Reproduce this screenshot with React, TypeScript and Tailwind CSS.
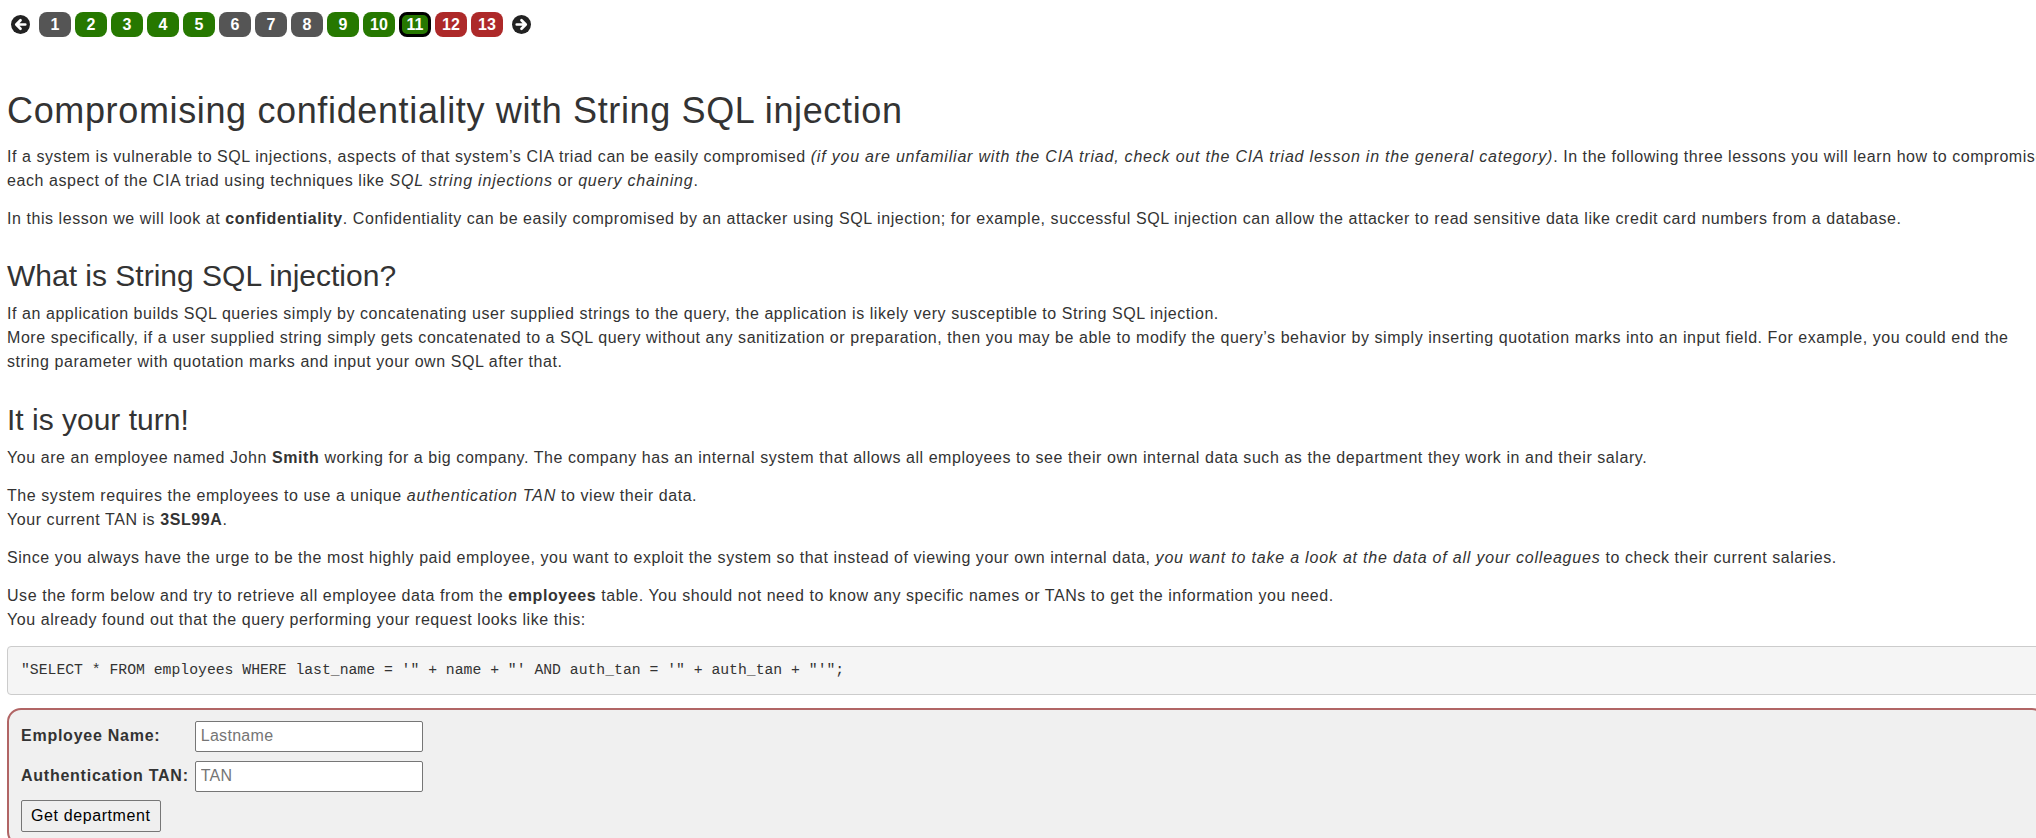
import React from 'react';

type PageState = 'gray' | 'green' | 'red';

const pages: { n: number; state: PageState }[] = [
  { n: 1, state: 'gray' },
  { n: 2, state: 'green' },
  { n: 3, state: 'green' },
  { n: 4, state: 'green' },
  { n: 5, state: 'green' },
  { n: 6, state: 'gray' },
  { n: 7, state: 'gray' },
  { n: 8, state: 'gray' },
  { n: 9, state: 'green' },
  { n: 10, state: 'green' },
  { n: 11, state: 'green' },
  { n: 12, state: 'red' },
  { n: 13, state: 'red' },
];

const stateClass: Record<PageState, string> = {
  gray: 'bg-[#555555]',
  green: 'bg-[#267800]',
  red: 'bg-[#ad2929]',
};

const CURRENT = 11;

const ArrowCircle: React.FC<{ dir: 'left' | 'right' }> = ({ dir }) => (
  <svg width="19" height="19" viewBox="0 0 18 18" className="shrink-0">
    <circle cx="9" cy="9" r="9" fill="#222" />
    {dir === 'left' ? (
      <path d="M13.5 9H5.5M9 5L5 9L9 13" stroke="#fff" strokeWidth="2.6" fill="none" strokeLinecap="round" strokeLinejoin="round" />
    ) : (
      <path d="M4.5 9H12.5M9 5L13 9L9 13" stroke="#fff" strokeWidth="2.6" fill="none" strokeLinecap="round" strokeLinejoin="round" />
    )}
  </svg>
);

const Pagination: React.FC = () => (
  <div className="flex items-center h-[25px] pl-[4px]">
    <ArrowCircle dir="left" />
    <div className="flex items-center gap-[4px] ml-[9px]">
      {pages.map((p) => (
        <div
          key={p.n}
          className={`w-[32px] h-[25px] rounded-[8px] flex items-center justify-center text-white font-bold text-[16px] leading-none ${stateClass[p.state]} ${
            p.n === CURRENT ? 'border-[3px] border-black' : ''
          }`}
        >
          {p.n}
        </div>
      ))}
    </div>
    <div className="ml-[9px]">
      <ArrowCircle dir="right" />
    </div>
  </div>
);

// italic and bold runs render wider in the reference, so they get their own tracking
const I: React.FC<{ children: React.ReactNode }> = ({ children }) => <em className="tracking-[0.8px]">{children}</em>;
const B: React.FC<{ children: React.ReactNode }> = ({ children }) => <strong className="tracking-[0.6px]">{children}</strong>;

export default function App() {
  return (
    <div className="h-screen w-full overflow-hidden bg-white text-[#333333] font-['Liberation_Sans',Arial,sans-serif]">
      <div className="w-[2046px] pl-[7px] pt-[12px]">
        <Pagination />

        <h1 className="text-[36px] tracking-[0.64px] leading-[1.1] font-normal mt-[54px] mb-[14px]">
          Compromising confidentiality with String SQL injection
        </h1>
        <div className="text-[16px] leading-[24px] tracking-[0.56px]">
          <p className="mb-[14px]">
            If a system is vulnerable to SQL injections, aspects of that system’s CIA triad can be easily compromised{' '}
            <I>(if you are unfamiliar with the CIA triad, check out the CIA triad lesson in the general category)</I>. In the
            following three lessons you will learn how to compromise each aspect of the CIA triad using techniques like{' '}
            <I>SQL string injections</I> or <I>query chaining</I>.
          </p>
          <p className="mb-[14px]">
            In this lesson we will look at <B>confidentiality</B>. Confidentiality can be easily compromised by an attacker
            using SQL injection; for example, successful SQL injection can allow the attacker to read sensitive data like credit
            card numbers from a database.
          </p>
        </div>

        <h2 className="text-[30px] leading-[1.1] font-normal mt-[28px] mb-[10px]">What is String SQL injection?</h2>
        <div className="text-[16px] leading-[24px] tracking-[0.56px]">
          <p className="mb-[14px]">
            If an application builds SQL queries simply by concatenating user supplied strings to the query, the application is
            likely very susceptible to String SQL injection.
            <br />
            More specifically, if a user supplied string simply gets concatenated to a SQL query without any sanitization or
            preparation, then you may be able to modify the query’s behavior by simply inserting quotation marks into an input
            field. For example, you could end the string parameter with quotation marks and input your own SQL after that.
          </p>
        </div>

        <h2 className="text-[30px] leading-[1.1] font-normal mt-[29px] mb-[10px]">It is your turn!</h2>
        <div className="text-[16px] leading-[24px] tracking-[0.56px]">
          <p className="mb-[14px]">
            You are an employee named John <B>Smith</B> working for a big company. The company has an internal system that
            allows all employees to see their own internal data such as the department they work in and their salary.
          </p>
          <p className="mb-[14px]">
            The system requires the employees to use a unique <I>authentication TAN</I> to view their data.
            <br />
            Your current TAN is <B>3SL99A</B>.
          </p>
          <p className="mb-[14px]">
            Since you always have the urge to be the most highly paid employee, you want to exploit the system so that instead
            of viewing your own internal data, <I>you want to take a look at the data of all your colleagues</I> to check their
            current salaries.
          </p>
          <p className="mb-[14px]">
            Use the form below and try to retrieve all employee data from the <B>employees</B> table. You should not need to
            know any specific names or TANs to get the information you need.
            <br />
            You already found out that the query performing your request looks like this:
          </p>
        </div>

        <pre className="bg-[#f5f5f5] border border-[#cccccc] rounded-[4px] px-[13px] py-[13px] text-[14.75px] leading-[21px] text-[#333] font-['Liberation_Mono',monospace] mb-[13px]">
          "SELECT * FROM employees WHERE last_name = '" + name + "' AND auth_tan = '" + auth_tan + "'";
        </pre>

        <form
          className="bg-[#f0f0f0] border-2 border-[#b16565] rounded-[14px] pl-[12px] pt-[11px] pb-[12px]"
          onSubmit={(e) => e.preventDefault()}
        >
          <table className="border-collapse">
            <tbody>
              <tr>
                <td className="pr-[6px] pb-[9px] align-middle">
                  <label className="font-bold text-[16px] tracking-[0.75px]">Employee Name:</label>
                </td>
                <td className="pb-[9px]">
                  <input
                    type="text"
                    placeholder="Lastname"
                    className="w-[228px] h-[31px] bg-white border border-[#767676] rounded-[2px] px-[5px] text-[16px] tracking-[0.3px] placeholder:text-[#757575] outline-none"
                  />
                </td>
              </tr>
              <tr>
                <td className="pr-[6px] pb-[8px] align-middle">
                  <label className="font-bold text-[16px] tracking-[0.75px]">Authentication TAN:</label>
                </td>
                <td className="pb-[8px]">
                  <input
                    type="text"
                    placeholder="TAN"
                    className="w-[228px] h-[31px] bg-white border border-[#767676] rounded-[2px] px-[5px] text-[16px] tracking-[0.3px] placeholder:text-[#757575] outline-none"
                  />
                </td>
              </tr>
              <tr>
                <td colSpan={2}>
                  <button
                    type="submit"
                    className="h-[32px] px-[9px] bg-[#efefef] border border-[#767676] rounded-[2px] text-[16px] tracking-[0.6px] text-black"
                  >
                    Get department
                  </button>
                </td>
              </tr>
            </tbody>
          </table>
        </form>
      </div>
    </div>
  );
}
